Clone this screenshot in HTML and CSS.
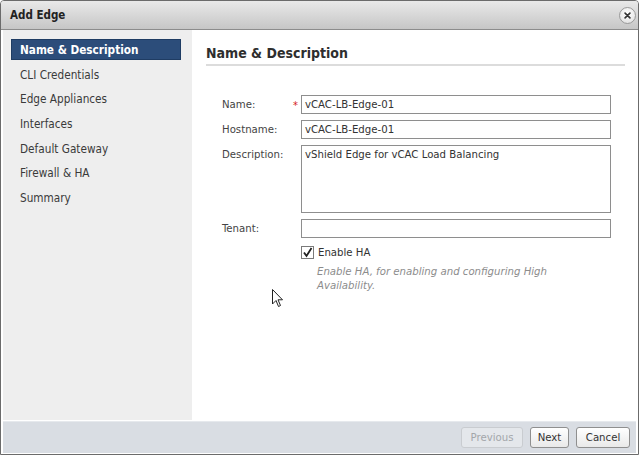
FILE: index.html
```html
<!DOCTYPE html>
<html>
<head>
<meta charset="utf-8">
<link rel="stylesheet" href="styles.css">
</head>
<body>
<div class="dialog">
  <div class="titlebar">
    <span class="title">Add Edge</span>
    <span class="close">
      <svg width="16" height="16" viewBox="0 0 16 16"><path d="M5 5 L11 11 M11 5 L5 11" stroke="#333" stroke-width="2" stroke-linecap="round"/></svg>
    </span>
  </div>
  <div class="main">
    <div class="nav">
      <div class="nav-item active">Name &amp; Description</div>
      <div class="nav-item">CLI Credentials</div>
      <div class="nav-item">Edge Appliances</div>
      <div class="nav-item">Interfaces</div>
      <div class="nav-item">Default Gateway</div>
      <div class="nav-item">Firewall &amp; HA</div>
      <div class="nav-item">Summary</div>
    </div>
    <div class="content">
      <h2 class="heading">Name &amp; Description</h2>
      <div class="form">
        <div class="label">Name:<span class="req">*</span></div>
        <div class="field">vCAC-LB-Edge-01</div>
        <div class="label">Hostname:</div>
        <div class="field">vCAC-LB-Edge-01</div>
        <div class="label">Description:</div>
        <div class="field area">vShield Edge for vCAC Load Balancing</div>
        <div class="label">Tenant:</div>
        <div class="field"></div>
        <div class="label"></div>
        <div class="check-row">
          <span class="checkbox"><svg width="11" height="11" viewBox="0 0 11 11"><path d="M2 5.5 L4.5 9 L9.5 1" fill="none" stroke="#222" stroke-width="1.8"/></svg></span>
          <span>Enable HA</span>
        </div>
        <div class="label"></div>
        <div class="help">Enable HA, for enabling and configuring High Availability.</div>
      </div>
      <svg class="cursor" width="13" height="20" viewBox="0 0 13 20"><path d="M0.5 0.5 L0.5 15 L4 11.5 L6.5 17.5 L8.5 16.5 L6 10.8 L10.5 10.8 Z" fill="#fff" stroke="#222" stroke-width="1"/></svg>
    </div>
  </div>
  <div class="footer">
    <button class="btn disabled prev">Previous</button>
    <button class="btn next">Next</button>
    <button class="btn cancel">Cancel</button>
  </div>
</div>
</body>
</html>
```
FILE: styles.css
```css
* { box-sizing: border-box; }
html, body { margin: 0; padding: 0; background: #fff; }
body {
  font-family: "DejaVu Sans Condensed", "DejaVu Sans", sans-serif;
  font-stretch: condensed;
  font-size: 11.3px;
  color: #333;
}
.dialog {
  width: 639px;
  height: 455px;
  border: 1px solid #6b6b6b;
  border-radius: 4px 4px 0 0;
  display: flex;
  flex-direction: column;
  background: #fff;
  overflow: hidden;
}
.titlebar {
  height: 29px;
  flex: none;
  background: linear-gradient(#e9e9e9, #c6c6c6);
  border-bottom: 1px solid #8c8c8c;
  display: flex;
  align-items: center;
  justify-content: space-between;
  padding: 0 2px 0 9px;
}
.title {
  font-weight: bold;
  font-size: 11.5px;
  color: #222;
}
.close {
  width: 17px;
  height: 17px;
  border-radius: 50%;
  border: 1px solid #9a9a9a;
  background: radial-gradient(circle at 50% 35%, #ffffff, #dcdcdc);
  display: flex;
  align-items: center;
  justify-content: center;
}
.close svg { width: 13px; height: 13px; }
.main {
  flex: 1;
  display: flex;
  padding: 0 2px 0 2px;
  min-height: 0;
}
.nav {
  width: 189px;
  flex: none;
  background: #eeeeee;
  padding: 9px 11px 0 8px;
  display: flex;
  flex-direction: column;
}
.nav-item {
  height: 24.7px;
  line-height: 23px;
  padding-left: 9px;
  color: #3a3a3a;
  font-size: 11.7px;
}
.nav-item.active {
  height: 21px;
  margin-bottom: 3.7px;
  background: #2c4d7a;
  color: #fff;
  font-weight: bold;
  border: 1px solid #1f3c63;
  line-height: 20px;
  padding-left: 8px;
}
.content {
  flex: 1;
  position: relative;
  padding: 14px 11px 0 14px;
}
.heading {
  margin: 0;
  font-size: 14px;
  font-weight: bold;
  color: #2e2e2e;
  height: 22px;
  line-height: 18px;
  border-bottom: 2px solid #dcdcdc;
}
.form {
  display: grid;
  grid-template-columns: 79px 310px;
  row-gap: 6px;
  margin-top: 29px;
  margin-left: 16px;
}
.label {
  position: relative;
  color: #444;
  padding-top: 3px;
  line-height: 13px;
}
.req {
  position: absolute;
  right: 3px;
  top: 4px;
  color: #d42020;
  font-size: 11px;
}
.field {
  height: 19px;
  border: 1px solid #8e8e8e;
  background: #fff;
  padding: 2px 3px;
  line-height: 13px;
  color: #333;
}
.field.area { height: 68px; }
.check-row {
  display: flex;
  align-items: center;
  gap: 4px;
  height: 13px;
  margin-top: 2px;
  color: #333;
}
.checkbox {
  width: 13px;
  height: 13px;
  border: 1px solid #7a7a7a;
  background: #fff;
  display: flex;
  align-items: center;
  justify-content: center;
}
.help {
  font-style: italic;
  color: #8c8c8c;
  line-height: 14px;
  padding-left: 16px;
  padding-right: 40px;
}
.cursor {
  position: absolute;
  left: 80px;
  top: 259px;
}
.footer {
  height: 32px;
  flex: none;
  margin: 1px 2px 1px 2px;
  background: #d9dde3;
  border-top: 1px solid #e6e9ed;
  display: flex;
  justify-content: flex-end;
  align-items: center;
  gap: 7px;
  padding-right: 6px;
}
.btn {
  font-family: inherit;
  font-stretch: condensed;
  font-size: 11.3px;
  height: 21px;
  padding: 0;
  border: 1px solid #8f8f8f;
  border-radius: 3px;
  background: linear-gradient(#ffffff, #e9e9e9);
  color: #333;
}
.btn.prev { width: 62px; }
.btn.next { width: 39px; }
.btn.cancel { width: 54px; }
.btn.disabled {
  border-color: #c9ccd0;
  background: #e4e7eb;
  color: #a3a6aa;
}
```
